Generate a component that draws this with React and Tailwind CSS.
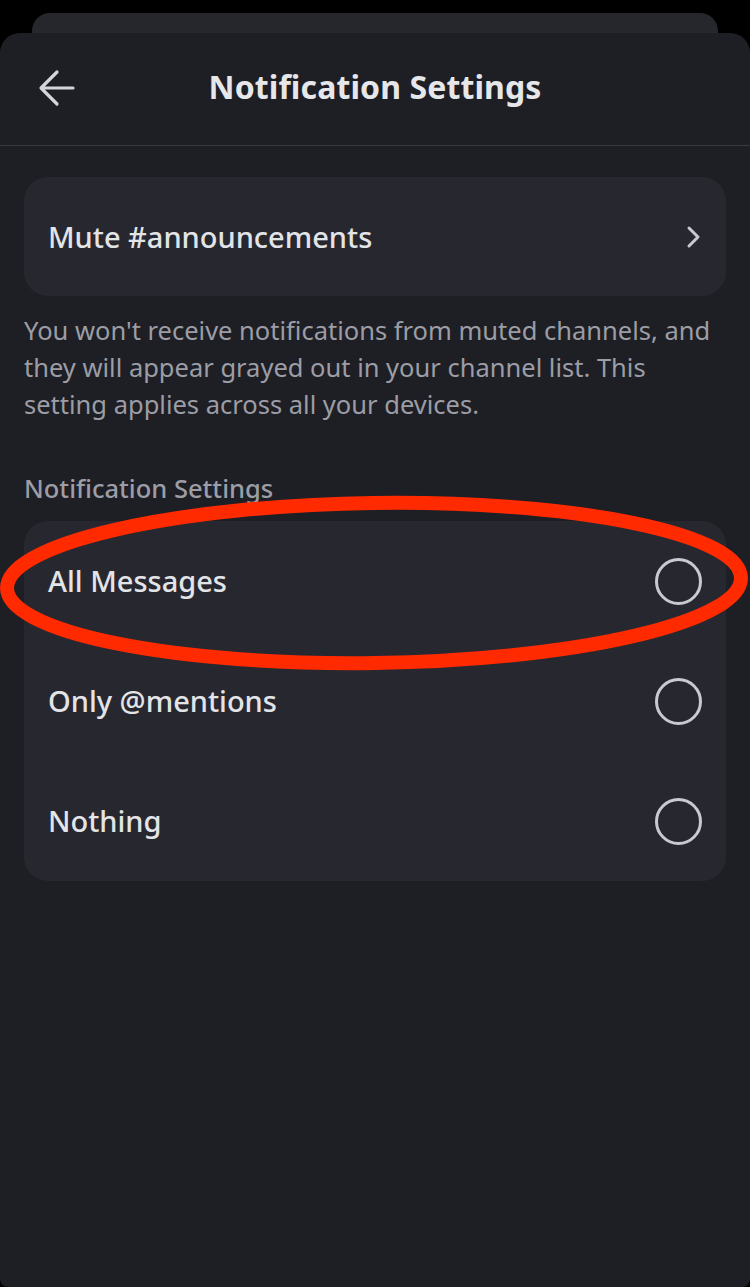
import React from "react";

function Radio() {
  return (
    <div className="w-[47px] h-[47px] rounded-full border-[3px] border-[#c9cad0]" />
  );
}

function Row({ label }) {
  return (
    <div className="h-[120px] flex items-center justify-between pl-[24px] pr-[24px]">
      <span className="text-[29px] font-medium text-[#e3e4e8]">{label}</span>
      <Radio />
    </div>
  );
}

export default function App() {
  return (
    <div
      className="relative w-[750px] h-[1287px] bg-black overflow-hidden"
      style={{ fontFamily: '"Noto Sans", "Open Sans", sans-serif' }}
    >
      <div className="mx-[32px] mt-[13px] h-[20px] rounded-t-[18px] bg-[#26272d]" />
      <div className="h-[1254px] rounded-t-[20px] rounded-b-[8px] bg-[#1e1f24] flex flex-col">
        <div className="relative h-[112px] flex items-center justify-center pb-[5px]">
          <svg
            className="absolute left-[38px] top-[36px]"
            width="38"
            height="38"
            viewBox="0 0 38 38"
            fill="none"
            stroke="#d4d5da"
            strokeWidth="3.2"
            strokeLinecap="round"
            strokeLinejoin="round"
          >
            <path d="M35 19H4M19 3L3 19l16 16" />
          </svg>
          <h1 className="text-[32px] font-bold text-[#e6e7ea] tracking-[0.1px]">
            Notification Settings
          </h1>
        </div>
        <div className="h-px bg-[#393a40]" />
        <div className="px-[24px] pt-[31px]">
          <div className="h-[119px] rounded-[24px] bg-[#27282f] flex items-center justify-between pl-[24px] pr-[24px]">
            <span className="text-[29px] font-medium text-[#e3e4e8]">
              Mute #announcements
            </span>
            <svg
              width="16"
              height="24"
              viewBox="0 0 16 24"
              fill="none"
              stroke="#c9cad0"
              strokeWidth="3"
              strokeLinecap="round"
              strokeLinejoin="round"
            >
              <path d="M3 3l9 9-9 9" />
            </svg>
          </div>
          <p className="mt-[16px] text-[25.5px] leading-[37px] text-[#9c9da6] whitespace-nowrap">
            You won't receive notifications from muted channels, and
            <br />
            they will appear grayed out in your channel list. This
            <br />
            setting applies across all your devices.
          </p>
          <div className="mt-[50px] mb-[18px] text-[25.5px] leading-[30px] font-medium text-[#9c9da6]">
            Notification Settings
          </div>
          <div className="rounded-[24px] bg-[#27282f] flex flex-col">
            <Row label="All Messages" />
            <Row label="Only @mentions" />
            <Row label="Nothing" />
          </div>
        </div>
      </div>
      <svg
        className="absolute left-0 top-0 pointer-events-none"
        width="750"
        height="1287"
        viewBox="0 0 750 1287"
        fill="none"
      >
        <ellipse
          cx="374"
          cy="583"
          rx="367"
          ry="80"
          stroke="#ff2a00"
          strokeWidth="14"
          transform="rotate(-0.8 374 583)"
        />
      </svg>
    </div>
  );
}
